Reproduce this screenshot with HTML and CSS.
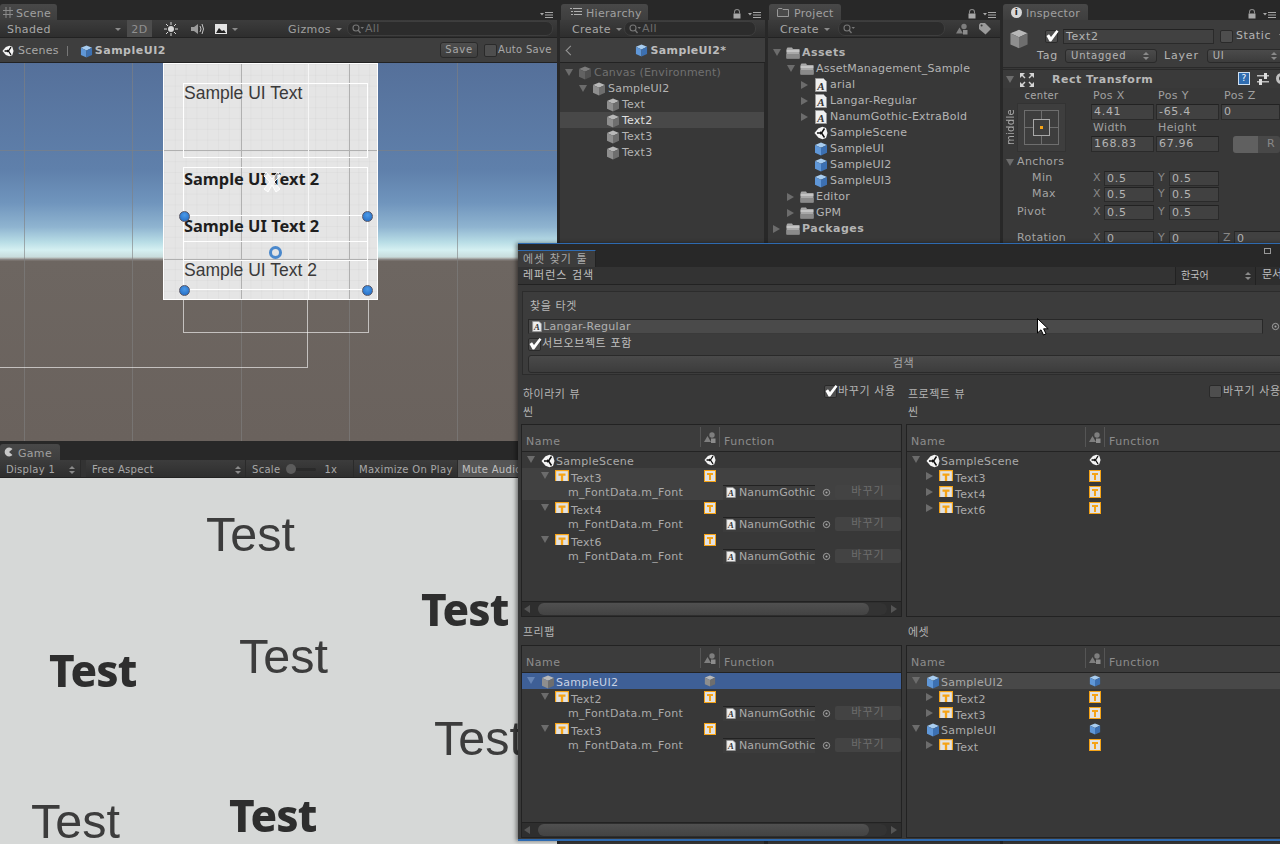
FILE: index.html
```html
<!DOCTYPE html>
<html lang="ko">
<head>
    <meta charset="UTF-8">
    <title>Unity Editor - Asset Finder</title>
    <link rel="stylesheet" href="styles.css">
</head>
<body>
    <!-- shared icons -->
    <svg class="defs" xmlns="http://www.w3.org/2000/svg">
        <symbol id="cube-blue" viewBox="0 0 14 14">
            <path d="M7 0.5 13 3 7 5.8 1 3z" fill="#a8cdf0"/>
            <path d="M1 3 7 5.8V13.5L1 10.8z" fill="#5f97d8"/>
            <path d="M13 3 7 5.8V13.5L13 10.8z" fill="#3c70b2"/>
        </symbol>
        <symbol id="cube-gray" viewBox="0 0 14 14">
            <path d="M7 0.5 13 3 7 5.8 1 3z" fill="#b8b8b8"/>
            <path d="M1 3 7 5.8V13.5L1 10.8z" fill="#8e8e8e"/>
            <path d="M13 3 7 5.8V13.5L13 10.8z" fill="#6e6e6e"/>
        </symbol>
        <symbol id="cube-dim" viewBox="0 0 14 14">
            <path d="M7 0.5 13 3 7 5.8 1 3z" fill="#7c7c7c"/>
            <path d="M1 3 7 5.8V13.5L1 10.8z" fill="#626262"/>
            <path d="M13 3 7 5.8V13.5L13 10.8z" fill="#505050"/>
        </symbol>
        <symbol id="unity" viewBox="0 0 14 14">
            <path d="M0.5 7 4.5 2.2 8.5 0.8 12 2 13.5 7 12 12 8.5 13.2 4.5 11.8z" fill="#f4f4f4"/>
            <path d="M3 7H7.5M7.5 7 10.5 2.5M7.5 7 10.5 11.5" stroke="#111" stroke-width="1.5" fill="none"/>
            <path d="M6 5.2 8.8 7 6 8.8z" fill="#111"/>
        </symbol>
        <symbol id="text-t" viewBox="0 0 12 12">
            <rect x="0.5" y="0.5" width="11" height="11" fill="#e2e2e2" stroke="#f5a316"/>
            <path d="M3 3H9V5H7V10H5V5H3z" fill="#f5a316"/>
        </symbol>
        <symbol id="folder" viewBox="0 0 14 12">
            <path d="M0.5 2 1.5 0.5H6L7 2H13.5V11.5H0.5z" fill="#a8a8a8"/>
            <path d="M0.5 3.5H13.5V4.5H0.5z" fill="#e0e0e0"/>
            <path d="M0.5 7H13.5V11.5H0.5z" fill="#8a8a8a"/>
        </symbol>
        <symbol id="font-a" viewBox="0 0 12 14">
            <path d="M0.5 0.5H8.5L11.5 3.5V13.5H0.5z" fill="#efefef" stroke="#999"/>
            <text x="6" y="12" font-family="Liberation Serif" font-size="11" font-weight="bold" font-style="italic" text-anchor="middle" fill="#333">A</text>
        </symbol>
        <symbol id="menu" viewBox="0 0 14 8">
            <path d="M0 2H4L2 4.5z" fill="#a8a8a8"/>
            <path d="M5 1H13V2H5zM5 3.5H13V4.5H5zM5 6H13V7H5z" fill="#a8a8a8"/>
        </symbol>
        <symbol id="lock" viewBox="0 0 8 10">
            <path d="M1 4.5V3A3 3 0 0 1 7 3V4.5H6V3A2 2 0 0 0 2 3V4.5z" fill="#8c8c8c"/>
            <rect x="0.5" y="4.5" width="7" height="5" fill="#a8a8a8"/>
        </symbol>
        <symbol id="target" viewBox="0 0 10 10">
            <circle cx="5" cy="5" r="3.5" fill="none" stroke="#aaa"/>
            <circle cx="5" cy="5" r="1.2" fill="#aaa"/>
        </symbol>
        <symbol id="shapes" viewBox="0 0 12 11">
            <circle cx="8" cy="3" r="2.7" fill="#7e7e7e"/>
            <path d="M0 10 3.5 4 7 10z" fill="#7e7e7e"/>
            <rect x="7" y="6.5" width="4.5" height="4.5" fill="#8c8c8c"/>
        </symbol>
        <symbol id="magnifier" viewBox="0 0 12 10">
            <circle cx="4" cy="4" r="3" fill="none" stroke="#777" stroke-width="1.1"/>
            <path d="M6 6 8.5 9" stroke="#777" stroke-width="1.3"/>
            <path d="M8.5 3H12L10.2 5z" fill="#777"/>
        </symbol>
        <symbol id="check" viewBox="0 0 14 14">
            <path d="M1.5 7 4 5.2 6 8 11.5 1 13.5 2.5 6.2 12.5H4.6z" fill="#fff"/>
        </symbol>
    </svg>

    <div class="editor">
        <!-- scene + game -->
        <div class="col-left">
            <section class="pane scene-pane">
                <div class="tabs">
                    <div class="tab tab-scene">
                        <svg class="hash" viewBox="0 0 10 11" width="10" height="11"><path d="M3 0V11M7 0V11M0 3.5H10M0 7.5H10" stroke="#8a8a8a"/></svg>Scene
                    </div>
                    <svg class="tab-menu"><use href="#menu"/></svg>
                </div>
                <div class="toolbar">
                    <span class="tb-shaded">Shaded<i class="mini-arrow"></i></span>
                    <span class="tb-2d">2D</span>
                    <svg class="tb-icon" viewBox="0 0 14 14" width="14" height="14">
                        <circle cx="7" cy="7" r="3" fill="#d8d8d8"/>
                        <path d="M7 0V3M7 11V14M0 7H3M11 7H14M2 2 4 4M10 10 12 12M12 2 10 4M4 10 2 12" stroke="#d8d8d8"/>
                    </svg>
                    <svg class="tb-icon" viewBox="0 0 14 14" width="14" height="14">
                        <path d="M0 5H3L7 2V12L3 9H0z" fill="#9c9c9c"/>
                        <path d="M9 4Q11 7 9 10M11 2Q14 7 11 12" fill="none" stroke="#c4c4c4"/>
                    </svg>
                    <svg class="tb-icon tb-img" viewBox="0 0 12 10" width="12" height="10">
                        <rect width="12" height="10" fill="#e4e4e4"/>
                        <path d="M1 9 4 4 7 7 9 6 11 9z" fill="#222"/>
                    </svg>
                    <i class="mini-arrow arrow-img"></i>
                    <span class="tb-gizmos">Gizmos<i class="mini-arrow"></i></span>
                    <div class="search scene-search"><svg class="mag"><use href="#magnifier"/></svg>All</div>
                </div>
                <div class="crumbs">
                    <svg class="ic12"><use href="#unity"/></svg>
                    <span class="crumb-scenes">Scenes</span>
                    <span class="crumb-bar"></span>
                    <svg class="ic13"><use href="#cube-blue"/></svg>
                    <b class="crumb-name">SampleUI2</b>
                    <span class="save-btn">Save</span>
                    <span class="checkbox"></span>
                    <span class="auto-save">Auto Save</span>
                </div>
                <div class="scene-view">
                    <span class="grid-v gv1"></span><span class="grid-v gv2"></span><span class="grid-v gv3"></span><span class="grid-v gv4"></span><span class="grid-v gv5"></span>
                    <span class="grid-h gh1"></span><span class="grid-h gh2"></span>
                    <div class="rect-below rb1"></div>
                    <div class="rect-below rb2"></div>
                    <div class="ui-canvas">
                        <span class="cv-line cv-v1"></span><span class="cv-line cv-v2"></span><span class="cv-line cv-h1"></span><span class="cv-line cv-h2"></span>
                        <span class="cv-white cw-v"></span>
                        <div class="ui-rect ur1"></div>
                        <div class="ui-rect ur2"></div>
                        <div class="ui-rect ur3"></div>
                        <div class="ui-text ut1">Sample UI Text</div>
                        <div class="ui-text ui-bold ut2">Sample UI Text 2</div>
                        <div class="ui-text ui-bold ut3">Sample UI Text 2</div>
                        <div class="ui-text ut4">Sample UI Text 2</div>
                        <svg class="move-tool" viewBox="0 0 24 24" width="24" height="24">
                            <path d="M6 2 12 9 18 2 20 6 14 12 20 19 16 22 12 15 8 22 4 19 10 12 4 6z" fill="#fff" fill-opacity="0.55" stroke="#fff"/>
                        </svg>
                        <span class="handle h1"></span><span class="handle h2"></span><span class="handle h3"></span><span class="handle h4"></span>
                        <span class="pivot"></span>
                    </div>
                </div>
            </section>

            <section class="pane game-pane">
                <div class="tabs">
                    <div class="tab tab-game"><svg class="pac" viewBox="0 0 10 10" width="10" height="10"><path d="M8.5 2A4.5 4.5 0 1 0 8.5 8L5 5z" fill="#c8c8c8"/></svg>Game</div>
                </div>
                <div class="toolbar game-bar">
                    <span class="gb-display">Display 1<i class="updown"></i></span>
                    <span class="gb-aspect">Free Aspect<i class="updown"></i></span>
                    <span class="gb-scale">Scale<i class="slider"><i class="thumb"></i></i><em>1x</em></span>
                    <span class="gb-max">Maximize On Play</span>
                    <span class="gb-mute">Mute Audio</span>
                </div>
                <div class="game-view">
                    <span class="test test-1">Test</span>
                    <span class="test test-bold test-2">Test</span>
                    <span class="test test-3">Test</span>
                    <span class="test test-bold test-4">Test</span>
                    <span class="test test-5">Test</span>
                    <span class="test test-6">Test</span>
                    <span class="test test-bold test-7">Test</span>
                </div>
            </section>
        </div>

        <!-- hierarchy -->
        <section class="pane">
            <div class="tabs">
                <div class="tab tab-hier"><svg class="list-ic" viewBox="0 0 12 8" width="12" height="8"><path d="M0 0H2V1H0zM3 0H12V1H3zM1 3H3V4H1zM4 3H12V4H4zM1 6H3V7H1zM4 6H12V7H4z" fill="#b0b0b0"/></svg>Hierarchy</div>
                <svg class="tab-lock"><use href="#lock"/></svg>
                <svg class="tab-menu"><use href="#menu"/></svg>
            </div>
            <div class="toolbar">
                <span class="create">Create<i class="mini-arrow"></i></span>
                <div class="search hier-search"><svg class="mag"><use href="#magnifier"/></svg>All</div>
            </div>
            <div class="prefab-head">
                <span class="back"></span>
                <svg class="ic13"><use href="#cube-blue"/></svg>
                <b>SampleUI2*</b>
            </div>
            <div class="tree hier-tree">
                <div class="row lv0 dim"><i class="tri-d"></i><svg class="ic"><use href="#cube-dim"/></svg>Canvas (Environment)</div>
                <div class="row lv1"><i class="tri-d"></i><svg class="ic"><use href="#cube-gray"/></svg>SampleUI2</div>
                <div class="row lv2"><i class="no-tri"></i><svg class="ic"><use href="#cube-gray"/></svg>Text</div>
                <div class="row lv2 picked"><i class="no-tri"></i><svg class="ic"><use href="#cube-gray"/></svg>Text2</div>
                <div class="row lv2"><i class="no-tri"></i><svg class="ic"><use href="#cube-gray"/></svg>Text3</div>
                <div class="row lv2"><i class="no-tri"></i><svg class="ic"><use href="#cube-gray"/></svg>Text3</div>
            </div>
        </section>

        <!-- project -->
        <section class="pane">
            <div class="tabs">
                <div class="tab tab-proj"><svg class="folder-tab" viewBox="0 0 12 9" width="12" height="9"><path d="M0.5 1.5 1.5 0.5H5L6 1.5H11.5V8.5H0.5z" fill="#4a4a4a" stroke="#999"/></svg>Project</div>
                <svg class="tab-lock"><use href="#lock"/></svg>
                <svg class="tab-menu"><use href="#menu"/></svg>
            </div>
            <div class="toolbar">
                <span class="create">Create<i class="mini-arrow"></i></span>
                <div class="search proj-search"><svg class="mag"><use href="#magnifier"/></svg></div>
                <svg class="proj-tool"><use href="#shapes"/></svg>
                <svg class="proj-tool" viewBox="0 0 12 12" width="12" height="12"><path d="M0 1.5 1.5 0H6L12 6 6.5 11.5 0 6z" fill="#9a9a9a"/><circle cx="2.6" cy="2.6" r="1" fill="#383838"/></svg>
            </div>
            <div class="tree proj-tree">
                <div class="row lv0 strong"><i class="tri-d"></i><svg class="ic"><use href="#folder"/></svg>Assets</div>
                <div class="row lv1"><i class="tri-d"></i><svg class="ic"><use href="#folder"/></svg>AssetManagement_Sample</div>
                <div class="row lv2"><i class="tri-r"></i><svg class="ic"><use href="#font-a"/></svg>arial</div>
                <div class="row lv2"><i class="tri-r"></i><svg class="ic"><use href="#font-a"/></svg>Langar-Regular</div>
                <div class="row lv2"><i class="tri-r"></i><svg class="ic"><use href="#font-a"/></svg>NanumGothic-ExtraBold</div>
                <div class="row lv2"><i class="no-tri"></i><svg class="ic"><use href="#unity"/></svg>SampleScene</div>
                <div class="row lv2"><i class="no-tri"></i><svg class="ic"><use href="#cube-blue"/></svg>SampleUI</div>
                <div class="row lv2"><i class="no-tri"></i><svg class="ic"><use href="#cube-blue"/></svg>SampleUI2</div>
                <div class="row lv2"><i class="no-tri"></i><svg class="ic"><use href="#cube-blue"/></svg>SampleUI3</div>
                <div class="row lv1"><i class="tri-r"></i><svg class="ic"><use href="#folder"/></svg>Editor</div>
                <div class="row lv1"><i class="tri-r"></i><svg class="ic"><use href="#folder"/></svg>GPM</div>
                <div class="row lv0 strong"><i class="tri-r"></i><svg class="ic"><use href="#folder"/></svg>Packages</div>
            </div>
        </section>

        <!-- inspector -->
        <section class="pane">
            <div class="tabs">
                <div class="tab tab-insp"><span class="info-ic">i</span>Inspector</div>
                <svg class="tab-lock"><use href="#lock"/></svg>
                <svg class="tab-menu"><use href="#menu"/></svg>
            </div>
            <div class="insp-head">
                <svg class="insp-cube"><use href="#cube-gray"/></svg>
                <div class="insp-lines">
                    <div class="insp-line">
                        <span class="checkbox on"><svg><use href="#check"/></svg></span>
                        <span class="field name-field">Text2</span>
                        <span class="checkbox"></span>
                        <span class="static">Static</span>
                        <i class="big-arrow"></i>
                    </div>
                    <div class="insp-line tag-line">
                        <span>Tag</span>
                        <span class="popup tag-pop">Untagged<i class="updown"></i></span>
                        <span class="layer-label">Layer</span>
                        <span class="popup layer-pop">UI<i class="updown"></i></span>
                    </div>
                </div>
            </div>
            <div class="comp-head">
                <i class="tri-d"></i>
                <svg class="rt-ic" viewBox="0 0 16 16" width="16" height="16"><path d="M1 1H6L4 3 6.5 5.5 5.5 6.5 3 4 1 6zM15 1V6L13 4 10.5 6.5 9.5 5.5 12 3 10 1zM1 15V10L3 12 5.5 9.5 6.5 10.5 4 13 6 15zM15 15H10L12 13 9.5 10.5 10.5 9.5 13 12 15 10z" fill="#d4d4d4"/></svg>
                <b>Rect Transform</b>
                <span class="help-ic">?</span>
                <svg class="sliders-ic" viewBox="0 0 12 12" width="12" height="12"><path d="M0 2H12V3.5H0zM0 8H12V9.5H0z" fill="#bbb"/><rect x="7" y="0" width="3" height="6" fill="#ddd"/><rect x="2" y="6" width="3" height="6" fill="#ddd"/></svg>
                <span class="gear-ic"></span>
            </div>
            <div class="rect-grid">
                <div class="anchor-col">
                    <span class="anchor-top">center</span>
                    <div class="anchor-wrap">
                        <span class="anchor-side">middle</span>
                        <div class="anchor-box"><div class="anchor-outer"><div class="anchor-inner"><i></i></div></div></div>
                    </div>
                </div>
                <div class="pos-col">
                    <div class="lab3"><span>Pos X</span><span>Pos Y</span><span>Pos Z</span></div>
                    <div class="val3"><span class="field">4.41</span><span class="field">-65.4</span><span class="field">0</span></div>
                    <div class="lab3"><span>Width</span><span>Height</span></div>
                    <div class="val3"><span class="field">168.83</span><span class="field">67.96</span><span class="blueprint"><i></i><em>R</em></span></div>
                </div>
            </div>
            <div class="prop anchors-h"><i class="tri-d"></i>Anchors</div>
            <div class="prop xy sub"><span class="prop-name">Min</span><span class="ax">X</span><span class="field">0.5</span><span class="ax">Y</span><span class="field">0.5</span></div>
            <div class="prop xy sub"><span class="prop-name">Max</span><span class="ax">X</span><span class="field">0.5</span><span class="ax">Y</span><span class="field">0.5</span></div>
            <div class="prop xy pivot-row"><span class="prop-name">Pivot</span><span class="ax">X</span><span class="field">0.5</span><span class="ax">Y</span><span class="field">0.5</span></div>
            <div class="prop xy rot-row"><span class="prop-name">Rotation</span><span class="ax">X</span><span class="field">0</span><span class="ax">Y</span><span class="field">0</span><span class="ax ax-z">Z</span><span class="field">0</span></div>
        </section>
    </div>

    <!-- floating window -->
    <div class="win">
        <div class="win-top">
            <div class="win-tab">에셋 찾기 툴</div>
            <span class="win-ctl"></span>
        </div>
        <div class="win-bar">
            <span class="win-title">레퍼런스 검색</span>
            <span class="lang-pop">한국어<i class="updown"></i></span>
            <span class="doc-btn">문서</span>
        </div>
        <div class="target-box">
            <div class="target-label">찾을 타겟</div>
            <div class="target-field-row">
                <div class="target-field"><svg class="ic-font"><use href="#font-a"/></svg>Langar-Regular</div>
                <svg class="ic-target"><use href="#target"/></svg>
            </div>
            <label class="check-row"><span class="checkbox on"><svg><use href="#check"/></svg></span>서브오브젝트 포함</label>
            <div class="search-btn">검색</div>
        </div>

        <div class="win-cols">
            <div class="col">
                <div class="col-head"><span>하이라키 뷰</span><label class="use-check"><span class="checkbox on"><svg><use href="#check"/></svg></span>바꾸기 사용</label></div>
                <div class="col-sub">씬</div>
                <div class="table">
                    <div class="t-head"><span>Name</span><span class="t-ic"><svg><use href="#shapes"/></svg></span><span>Function</span></div>
                    <div class="t-body">
                        <div class="t-row"><div class="t-name wl0"><i class="tri-d"></i><svg class="ic"><use href="#unity"/></svg>SampleScene</div><svg class="ic2"><use href="#unity"/></svg></div>
                        <div class="t-hilite">
                            <div class="t-row"><div class="t-name wl1"><i class="tri-d"></i><svg class="ic-t"><use href="#text-t"/></svg>Text3</div><svg class="ic2"><use href="#text-t"/></svg></div>
                            <div class="t-row"><div class="t-name wl2">m_FontData.m_Font</div><div class="fn-cell"><div class="fn-field"><svg class="ic-font"><use href="#font-a"/></svg>NanumGothic</div><svg class="ic-target"><use href="#target"/></svg><span class="swap-btn">바꾸기</span></div></div>
                        </div>
                        <div class="t-row"><div class="t-name wl1"><i class="tri-d"></i><svg class="ic-t"><use href="#text-t"/></svg>Text4</div><svg class="ic2"><use href="#text-t"/></svg></div>
                        <div class="t-row"><div class="t-name wl2">m_FontData.m_Font</div><div class="fn-cell"><div class="fn-field"><svg class="ic-font"><use href="#font-a"/></svg>NanumGothic</div><svg class="ic-target"><use href="#target"/></svg><span class="swap-btn">바꾸기</span></div></div>
                        <div class="t-row"><div class="t-name wl1"><i class="tri-d"></i><svg class="ic-t"><use href="#text-t"/></svg>Text6</div><svg class="ic2"><use href="#text-t"/></svg></div>
                        <div class="t-row"><div class="t-name wl2">m_FontData.m_Font</div><div class="fn-cell"><div class="fn-field"><svg class="ic-font"><use href="#font-a"/></svg>NanumGothic</div><svg class="ic-target"><use href="#target"/></svg><span class="swap-btn">바꾸기</span></div></div>
                    </div>
                    <div class="t-scroll"><i class="arr-l"></i><div class="s-track"><div class="s-thumb"></div></div><i class="arr-r"></i></div>
                </div>
            </div>

            <div class="col">
                <div class="col-head"><span>프로젝트 뷰</span><label class="use-check"><span class="checkbox"></span>바꾸기 사용</label></div>
                <div class="col-sub">씬</div>
                <div class="table">
                    <div class="t-head"><span>Name</span><span class="t-ic"><svg><use href="#shapes"/></svg></span><span>Function</span></div>
                    <div class="t-body">
                        <div class="t-row"><div class="t-name wl0"><i class="tri-d"></i><svg class="ic"><use href="#unity"/></svg>SampleScene</div><svg class="ic2"><use href="#unity"/></svg></div>
                        <div class="t-row"><div class="t-name wl1"><i class="tri-r"></i><svg class="ic-t"><use href="#text-t"/></svg>Text3</div><svg class="ic2"><use href="#text-t"/></svg></div>
                        <div class="t-row"><div class="t-name wl1"><i class="tri-r"></i><svg class="ic-t"><use href="#text-t"/></svg>Text4</div><svg class="ic2"><use href="#text-t"/></svg></div>
                        <div class="t-row"><div class="t-name wl1"><i class="tri-r"></i><svg class="ic-t"><use href="#text-t"/></svg>Text6</div><svg class="ic2"><use href="#text-t"/></svg></div>
                    </div>
                </div>
            </div>

            <div class="col">
                <div class="col-head col-head-low"><span>프리팹</span></div>
                <div class="table">
                    <div class="t-head"><span>Name</span><span class="t-ic"><svg><use href="#shapes"/></svg></span><span>Function</span></div>
                    <div class="t-body">
                        <div class="t-row selected"><div class="t-name wl0"><i class="tri-d"></i><svg class="ic"><use href="#cube-gray"/></svg>SampleUI2</div><svg class="ic2"><use href="#cube-gray"/></svg></div>
                        <div class="t-row"><div class="t-name wl1"><i class="tri-d"></i><svg class="ic-t"><use href="#text-t"/></svg>Text2</div><svg class="ic2"><use href="#text-t"/></svg></div>
                        <div class="t-row"><div class="t-name wl2">m_FontData.m_Font</div><div class="fn-cell"><div class="fn-field"><svg class="ic-font"><use href="#font-a"/></svg>NanumGothic</div><svg class="ic-target"><use href="#target"/></svg><span class="swap-btn">바꾸기</span></div></div>
                        <div class="t-row"><div class="t-name wl1"><i class="tri-d"></i><svg class="ic-t"><use href="#text-t"/></svg>Text3</div><svg class="ic2"><use href="#text-t"/></svg></div>
                        <div class="t-row"><div class="t-name wl2">m_FontData.m_Font</div><div class="fn-cell"><div class="fn-field"><svg class="ic-font"><use href="#font-a"/></svg>NanumGothic</div><svg class="ic-target"><use href="#target"/></svg><span class="swap-btn">바꾸기</span></div></div>
                    </div>
                    <div class="t-scroll"><i class="arr-l"></i><div class="s-track"><div class="s-thumb"></div></div><i class="arr-r"></i></div>
                </div>
            </div>

            <div class="col">
                <div class="col-head col-head-low"><span>에셋</span></div>
                <div class="table">
                    <div class="t-head"><span>Name</span><span class="t-ic"><svg><use href="#shapes"/></svg></span><span>Function</span></div>
                    <div class="t-body">
                        <div class="t-row soft"><div class="t-name wl0"><i class="tri-d"></i><svg class="ic"><use href="#cube-blue"/></svg>SampleUI2</div><svg class="ic2"><use href="#cube-blue"/></svg></div>
                        <div class="t-row"><div class="t-name wl1"><i class="tri-r"></i><svg class="ic-t"><use href="#text-t"/></svg>Text2</div><svg class="ic2"><use href="#text-t"/></svg></div>
                        <div class="t-row"><div class="t-name wl1"><i class="tri-r"></i><svg class="ic-t"><use href="#text-t"/></svg>Text3</div><svg class="ic2"><use href="#text-t"/></svg></div>
                        <div class="t-row"><div class="t-name wl0"><i class="tri-d"></i><svg class="ic"><use href="#cube-blue"/></svg>SampleUI</div><svg class="ic2"><use href="#cube-blue"/></svg></div>
                        <div class="t-row"><div class="t-name wl1"><i class="tri-r"></i><svg class="ic-t"><use href="#text-t"/></svg>Text</div><svg class="ic2"><use href="#text-t"/></svg></div>
                    </div>
                </div>
            </div>
        </div>
    </div>

    <svg class="cursor" viewBox="0 0 12 18" width="12" height="18">
        <path d="M0.5 0.5V15L4 11.8 6.5 17 9 15.8 6.6 10.8H11.2z" fill="#fff" stroke="#000"/>
    </svg>
</body>
</html>
```
FILE: styles.css
```css
/* Global Styles */
html, body {
    margin: 0;
    padding: 0;
    width: 1280px;
    height: 844px;
    overflow: hidden;
}

body {
    position: relative;
    background: #282828;
    color: #b4b4b4;
    font-family: "DejaVu Sans", "Noto Sans CJK KR", sans-serif;
    font-size: 11px;
    line-height: 16px;
}

i, em {
    font-style: normal;
}

.defs {
    display: none;
}

.editor {
    display: grid;
    grid-template-columns: 557px 205px 232px 277px;
    column-gap: 3px;
    height: 844px;
}

.col-left {
    display: flex;
    flex-direction: column;
    overflow: hidden;
}

.pane {
    display: flex;
    flex-direction: column;
    background: #383838;
    overflow: hidden;
    min-width: 0;
}

.scene-pane {
    height: 441px;
    flex: none;
}

.game-pane {
    flex: 1;
    background: #282828;
}

/* Tabs */
.tabs {
    display: flex;
    align-items: flex-end;
    height: 20px;
    background: #282828;
    flex: none;
    position: relative;
}

.tab {
    display: flex;
    align-items: center;
    height: 16px;
    padding-top: 3px;
    box-sizing: border-box;
    background: linear-gradient(#484848, #3e3e3e);
    border-radius: 3px 3px 0 0;
    color: #a0a0a0;
    letter-spacing: 0.3px;
}

.tab-scene {
    width: 57px;
    padding-left: 3px;
}

.hash {
    margin: -3px 3px 0 0;
    flex: none;
}

.tab-game {
    width: 60px;
    padding-left: 4px;
}

.pac {
    margin: -3px 4px 0 0;
    flex: none;
}

.tab-hier {
    width: 87px;
    padding-left: 9px;
    margin-left: 1px;
}

.list-ic {
    margin: -3px 4px 0 0;
    flex: none;
}

.tab-proj {
    width: 72px;
    padding-left: 8px;
    margin-left: 1px;
}

.folder-tab {
    margin: -3px 5px 0 0;
    flex: none;
}

.tab-insp {
    width: 85px;
    padding-left: 8px;
}

.info-ic {
    flex: none;
    width: 11px;
    height: 11px;
    margin: -3px 4px 0 0;
    border-radius: 50%;
    background: #d8d8d8;
    color: #282828;
    font-size: 9px;
    line-height: 11px;
    font-weight: bold;
    text-align: center;
}

.tab-menu {
    position: absolute;
    right: 3px;
    top: 11px;
    width: 14px;
    height: 8px;
}

.tab-lock {
    position: absolute;
    right: 24px;
    top: 9px;
    width: 8px;
    height: 10px;
}

/* Toolbars */
.toolbar {
    display: flex;
    align-items: center;
    height: 18px;
    padding-top: 2px;
    box-sizing: border-box;
    flex: none;
    background: linear-gradient(#3c3c3c, #2e2e2e);
    border-bottom: 1px solid #222;
    color: #a8a8a8;
    letter-spacing: 0.4px;
    white-space: nowrap;
}

.mini-arrow {
    display: inline-block;
    width: 0;
    height: 0;
    margin-left: 8px;
    vertical-align: 2px;
    border: 3px solid transparent;
    border-top: 3px solid #8a8a8a;
    border-bottom: 0;
}

.tb-shaded {
    width: 120px;
    padding-left: 7px;
    box-sizing: border-box;
}

.tb-shaded .mini-arrow {
    margin-left: 64px;
}

.tb-2d {
    width: 25px;
    height: 17px;
    margin: -2px 0 0 7px;
    padding-top: 2px;
    box-sizing: border-box;
    background: #4c4c4c;
    text-align: center;
    color: #909090;
}

.tb-icon {
    margin: -2px 0 0 12px;
    flex: none;
}

.tb-icon + .tb-icon {
    margin-left: 13px;
}

.tb-icon.tb-img {
    margin-left: 10px;
}

.arrow-img {
    margin-left: 5px;
}

.tb-gizmos {
    margin-left: 50px;
    color: #a0a0a0;
}

.tb-gizmos .mini-arrow {
    margin-left: 5px;
}

.search {
    display: flex;
    align-items: center;
    height: 13px;
    margin-top: -2px;
    background: #2c2c2c;
    border: 1px solid #3e3e3e;
    border-radius: 7px;
    color: #6e6e6e;
}

.mag {
    width: 12px;
    height: 10px;
    margin: 0 1px 0 4px;
    flex: none;
}

.scene-search {
    width: 204px;
    margin-left: 5px;
}

.hier-search {
    width: 130px;
    margin-left: 8px;
}

.proj-search {
    width: 105px;
    margin-left: 14px;
}

.create {
    width: 50px;
    margin-left: 6px;
    padding-left: 6px;
    box-sizing: border-box;
}

.create .mini-arrow {
    margin-left: 5px;
}

.proj-tool {
    width: 12px;
    height: 12px;
    margin: -2px 0 0 11px;
    flex: none;
}

.crumbs {
    display: flex;
    align-items: center;
    height: 25px;
    padding: 2px 0 0 2px;
    box-sizing: border-box;
    background: #3e3e3e;
    border-bottom: 1px solid #222;
    flex: none;
    color: #a8a8a8;
    letter-spacing: 0.25px;
}

.ic12 {
    width: 12px;
    height: 12px;
    flex: none;
}

.ic13 {
    width: 13px;
    height: 13px;
    flex: none;
}

.crumb-scenes {
    margin-left: 4px;
}

.crumb-bar {
    width: 1px;
    height: 10px;
    margin: 0 12px 0 8px;
    background: #777;
}

.crumb-name {
    margin-left: 2px;
    color: #bcbcbc;
    letter-spacing: 0.5px;
}

.save-btn {
    height: 14px;
    margin: -2px 0 0 auto;
    padding: 0 4px;
    line-height: 14px;
    background: linear-gradient(#4e4e4e, #3e3e3e);
    border: 1px solid #2a2a2a;
    border-radius: 3px;
    font-size: 10px;
    letter-spacing: 0.8px;
}

.checkbox {
    display: inline-flex;
    width: 13px;
    height: 13px;
    flex: none;
    background: #4e4e4e;
    border: 1px solid #2a2a2a;
    border-radius: 2px;
    box-sizing: border-box;
}

.checkbox svg {
    width: 14px;
    height: 14px;
    margin: -2px 0 0 -1px;
    flex: none;
}

.crumbs .checkbox {
    margin: -2px 0 0 6px;
}

.auto-save {
    width: 59px;
    margin: -2px 0 0 1px;
    font-size: 10px;
    letter-spacing: 0.3px;
    white-space: nowrap;
}

/* Scene view: a free canvas of world-space lines and gizmos */
.scene-view {
    position: relative;
    flex: 1;
    overflow: hidden;
    background: linear-gradient(#55709a 0, #5f80ab 107px, #7095bd 140px, #8fb4d0 164px, #b8dde6 179px, #d5f0f2 187px, #c8dcdc 194px, #9e9a96 196px, #6d6661 198px, #6a625d 377px);
}

.grid-v {
    position: absolute;
    top: 0;
    bottom: 0;
    width: 1px;
    background: rgba(128, 128, 128, 0.6);
}

.gv1 { left: 24px; }
.gv2 { left: 132px; }
.gv3 { left: 241px; }
.gv4 { left: 349px; }
.gv5 { left: 457px; }

.grid-h {
    position: absolute;
    left: 0;
    right: 0;
    height: 1px;
    background: rgba(128, 128, 128, 0.6);
}

.gh1 { top: 87px; }
.gh2 { top: 196px; }

.rect-below {
    position: absolute;
    border-right: 1px solid rgba(255, 255, 255, 0.6);
    border-bottom: 1px solid rgba(255, 255, 255, 0.6);
}

.rb1 {
    left: 0;
    top: 100px;
    width: 307px;
    height: 204px;
}

.rb2 {
    left: 183px;
    top: 200px;
    width: 184px;
    height: 69px;
    border-left: 1px solid rgba(255, 255, 255, 0.6);
}

.ui-canvas {
    position: absolute;
    left: 163px;
    top: 0;
    width: 213px;
    height: 235px;
    background-color: #e5e5e5;
    background-image: linear-gradient(rgba(0, 0, 0, 0.025) 1px, transparent 1px), linear-gradient(90deg, rgba(0, 0, 0, 0.025) 1px, transparent 1px);
    background-size: 10.8px 10.8px;
    border: 1px solid #fff;
}

.cv-line {
    position: absolute;
    background: #b0b0b0;
}

.cv-v1, .cv-v2 {
    top: 0;
    bottom: 0;
    width: 1px;
}

.cv-v1 { left: 77px; }
.cv-v2 { left: 185px; }

.cv-h1, .cv-h2 {
    left: 0;
    right: 0;
    height: 1px;
}

.cv-h1 { top: 86px; }
.cv-h2 { top: 195px; }

.cv-white {
    position: absolute;
    left: 144px;
    top: 0;
    bottom: 0;
    width: 1px;
    background: #f6f6f6;
}

.ui-rect {
    position: absolute;
    left: 19px;
    width: 183px;
    border: 1px solid #fff;
}

.ur1 { top: 19px; height: 73px; }
.ur2 { top: 103px; height: 74px; border-bottom: 0; }
.ur3 { top: 151px; height: 73px; }

.ui-rect.ur3::before,
.ui-rect.ur3::after {
    content: "";
    position: absolute;
    left: 0;
    right: 0;
    height: 1px;
    background: #fff;
}

.ui-rect.ur3::before { top: 25px; }
.ui-rect.ur3::after { top: 44px; }

.ui-text {
    position: absolute;
    left: 20px;
    font-family: "Liberation Sans", sans-serif;
    font-size: 17.5px;
    line-height: 20px;
    color: #3a3a3a;
    white-space: nowrap;
}

.ui-bold {
    font-family: "Noto Sans", sans-serif;
    font-weight: 700;
    font-size: 16.4px;
    color: #1e1e1e;
}

.ut1 { top: 19px; }
.ut2 { top: 105px; }
.ut3 { top: 152px; }
.ut4 { top: 196px; }

.move-tool {
    position: absolute;
    left: 96px;
    top: 106px;
}

.handle {
    position: absolute;
    width: 9px;
    height: 9px;
    border-radius: 50%;
    background: radial-gradient(circle at 50% 35%, #4c9ae8, #1d66c0);
    border: 1px solid #556;
}

.h1 { left: 15px; top: 147px; }
.h2 { left: 198px; top: 147px; }
.h3 { left: 15px; top: 221px; }
.h4 { left: 198px; top: 221px; }

.pivot {
    position: absolute;
    left: 105px;
    top: 182px;
    width: 7px;
    height: 7px;
    border-radius: 50%;
    background: #e4e4e4;
    border: 3px solid #4a88cc;
}

/* Game */
.game-pane .tabs {
    height: 19px;
}

.game-bar {
    height: 18px;
    padding-top: 0;
    font-size: 10px;
    letter-spacing: 0.3px;
}

.game-bar > span {
    display: flex;
    align-items: center;
    height: 17px;
    box-sizing: border-box;
    padding-top: 2px;
    white-space: nowrap;
    border-right: 1px solid #2a2a2a;
}

.updown {
    position: relative;
    display: inline-block;
    flex: none;
    width: 7px;
    height: 8px;
    margin-left: auto;
}

.updown::before,
.updown::after {
    content: "";
    position: absolute;
    left: 0;
    border: 3px solid transparent;
}

.updown::before {
    top: -3px;
    border-bottom-color: #8a8a8a;
}

.updown::after {
    bottom: -3px;
    border-top-color: #8a8a8a;
}

.gb-display {
    width: 81px;
    padding: 2px 4px 0 6px;
}

.gb-aspect {
    width: 165px;
    padding: 2px 3px 0 6px;
    border-left: 5px solid #333;
}

.gb-scale {
    width: 108px;
    padding-left: 6px;
}

.slider {
    position: relative;
    width: 30px;
    height: 3px;
    margin-left: 6px;
    background: #2a2a2a;
    border-radius: 2px;
}

.thumb {
    position: absolute;
    left: 0;
    top: -4px;
    width: 10px;
    height: 10px;
    border-radius: 50%;
    background: #5c5c5c;
}

.gb-scale em {
    margin-left: 8px;
}

.gb-max {
    width: 104px;
    padding-left: 5px;
}

.gb-mute {
    flex: 1;
    padding-left: 4px;
    background: #555;
    color: #c0c0c0;
}

.game-view {
    position: relative;
    flex: 1;
    background: #d6d8d7;
    overflow: hidden;
}

.test {
    position: absolute;
    font-family: "Liberation Sans", sans-serif;
    font-size: 48.5px;
    line-height: 46px;
    color: #3c3c3c;
    filter: blur(0.6px);
}

.test-bold {
    font-family: "Noto Sans", sans-serif;
    font-weight: 800;
    font-size: 44px;
    color: #2e2e2e;
    letter-spacing: -1px;
}

.test-1 { left: 206px; top: 33px; }
.test-2 { left: 421px; top: 108px; }
.test-3 { left: 239px; top: 155px; }
.test-4 { left: 49px; top: 169px; }
.test-5 { left: 434px; top: 237px; }
.test-6 { left: 31px; top: 320px; }
.test-7 { left: 229px; top: 314px; }

/* Trees */
.prefab-head {
    display: flex;
    align-items: center;
    justify-content: center;
    height: 25px;
    padding: 1px 0 0 36px;
    box-sizing: border-box;
    position: relative;
    background: #3e3e3e;
    border-bottom: 1px solid #222;
    flex: none;
    letter-spacing: 0.35px;
    color: #bcbcbc;
}

.prefab-head b {
    margin-left: 3px;
}

.back {
    position: absolute;
    left: 7px;
    top: 9px;
    width: 6px;
    height: 6px;
    border-left: 1px solid #999;
    border-bottom: 1px solid #999;
    transform: rotate(45deg);
}

.tree {
    flex: 1;
    letter-spacing: 0.22px;
}

.hier-tree {
    padding-top: 1px;
    border-right: 1px solid #282828;
}

.proj-tree {
    padding-top: 6px;
}

.row {
    display: flex;
    align-items: center;
    height: 16px;
    padding-top: 1px;
    box-sizing: border-box;
    white-space: nowrap;
}

.lv0 { padding-left: 5px; }
.lv1 { padding-left: 19px; }
.lv2 { padding-left: 33px; }

.dim { color: #707070; }
.strong { font-weight: bold; letter-spacing: 0.5px; }

.picked {
    background: #484848;
    color: #e0e0e0;
}

.tri-d, .tri-r, .no-tri {
    display: inline-block;
    flex: none;
    box-sizing: border-box;
    width: 0;
    height: 0;
}

.tri-d {
    margin-right: 5px;
    border-left: 4px solid transparent;
    border-right: 4px solid transparent;
    border-top: 7px solid #6c6c6c;
}

.tri-r {
    margin-right: 6px;
    border-top: 4px solid transparent;
    border-bottom: 4px solid transparent;
    border-left: 7px solid #6c6c6c;
}

.no-tri {
    width: 13px;
}

.ic {
    width: 14px;
    height: 14px;
    margin-right: 2px;
    flex: none;
}

/* Inspector */
.insp-head {
    display: flex;
    height: 48px;
    flex: none;
    padding-left: 6px;
    background: #3c3c3c;
    border-bottom: 1px solid #2a2a2a;
    box-sizing: border-box;
}

.insp-cube {
    width: 20px;
    height: 22px;
    margin-top: 8px;
    flex: none;
}

.insp-lines {
    margin-left: 16px;
    flex: 1;
    min-width: 0;
}

.insp-line {
    display: flex;
    align-items: center;
    margin-top: 9px;
    height: 14px;
}

.field {
    display: block;
    height: 15px;
    padding-left: 2px;
    background: #414141;
    border: 1px solid #2a2a2a;
    border-top-color: #222;
    box-sizing: border-box;
    line-height: 14px;
    color: #b4b4b4;
    letter-spacing: 0.7px;
    overflow: hidden;
}

.name-field {
    width: 151px;
    flex: none;
    margin: 0 6px 0 5px;
}

.static {
    margin-left: 3px;
    letter-spacing: 0.6px;
}

.big-arrow {
    width: 0;
    height: 0;
    flex: none;
    margin-left: 8px;
    border: 4px solid transparent;
    border-top: 5px solid #aaa;
    border-bottom: 0;
}

.tag-line {
    margin-top: 6px;
    margin-left: -8px;
    letter-spacing: 0.8px;
}

.popup {
    display: flex;
    align-items: center;
    flex: none;
    height: 14px;
    padding: 0 6px 0 5px;
    box-sizing: border-box;
    background: linear-gradient(#4b4b4b, #3c3c3c);
    border: 1px solid #2a2a2a;
    border-radius: 3px;
    font-size: 10px;
    letter-spacing: 0.8px;
}

.tag-pop {
    width: 92px;
    margin-left: 7px;
}

.layer-label {
    margin-left: 7px;
}

.layer-pop {
    width: 78px;
    margin-left: 8px;
}

.comp-head {
    display: flex;
    align-items: center;
    height: 19px;
    flex: none;
    padding: 1px 0 0 3px;
    position: relative;
    background: #3a3a3a;
    border-top: 1px solid #2a2a2a;
    margin-top: 1px;
    box-sizing: border-box;
}

.comp-head b {
    margin-left: 17px;
    letter-spacing: 0.5px;
    color: #b8b8b8;
}

.help-ic {
    position: absolute;
    left: 235px;
    top: 2px;
    width: 12px;
    height: 13px;
    background: #2f6cb0;
    border: 1px solid #cfdff0;
    box-sizing: border-box;
    font-size: 9px;
    line-height: 11px;
    text-align: center;
    color: #fff;
}

.sliders-ic {
    position: absolute;
    left: 254px;
    top: 3px;
}

.gear-ic {
    position: absolute;
    left: 273px;
    top: 3px;
    width: 11px;
    height: 11px;
    border-radius: 50%;
    border: 3px solid #c0c0c0;
    box-sizing: border-box;
}

.rect-grid {
    display: flex;
    flex: none;
    height: 65px;
}

.anchor-col {
    width: 88px;
    flex: none;
    padding-left: 2px;
    box-sizing: border-box;
}

.anchor-top {
    display: block;
    width: 49px;
    margin-left: 12px;
    height: 15px;
    line-height: 16px;
    text-align: center;
    font-size: 10px;
    letter-spacing: 0.3px;
    color: #a8a8a8;
}

.anchor-wrap {
    display: flex;
}

.anchor-side {
    writing-mode: vertical-rl;
    transform: rotate(180deg);
    width: 11px;
    height: 49px;
    font-size: 10px;
    line-height: 11px;
    text-align: center;
    color: #a8a8a8;
    letter-spacing: 0.3px;
}

.anchor-box {
    display: flex;
    align-items: center;
    justify-content: center;
    width: 49px;
    height: 49px;
    margin-left: 1px;
    background: #3e3e3e;
    border: 1px solid #333;
    box-sizing: border-box;
    flex: none;
}

.anchor-outer {
    display: flex;
    align-items: center;
    justify-content: center;
    width: 35px;
    height: 35px;
    border: 1px solid #6e6e6e;
    box-sizing: border-box;
    background: linear-gradient(#6e6e6e, #6e6e6e) center / 100% 1px no-repeat, linear-gradient(#6e6e6e, #6e6e6e) center / 1px 100% no-repeat;
}

.anchor-inner {
    display: flex;
    align-items: center;
    justify-content: center;
    width: 17px;
    height: 17px;
    border: 1px solid #a8a8a8;
    box-sizing: border-box;
    background: #3e3e3e;
}

.anchor-inner i {
    width: 3px;
    height: 3px;
    background: #f5a316;
}

.pos-col {
    flex: 1;
    min-width: 0;
}

.lab3 {
    display: grid;
    grid-template-columns: 65px 66px 1fr;
    height: 16px;
    padding-left: 2px;
    letter-spacing: 0.4px;
    color: #a0a0a0;
}

.val3 {
    display: grid;
    grid-template-columns: 63px 63px 1fr;
    column-gap: 2px;
    height: 16px;
}

.val3 .field {
    height: 16px;
    line-height: 14px;
}

.blueprint {
    display: flex;
    height: 17px;
    margin-left: 12px;
    border-radius: 3px;
    overflow: hidden;
}

.blueprint i {
    width: 25px;
    background: #606060;
}

.blueprint em {
    flex: 1;
    padding-left: 9px;
    background: #484848;
    color: #888;
}

.prop {
    display: flex;
    align-items: center;
    height: 16px;
    flex: none;
    letter-spacing: 0.4px;
    color: #a4a4a4;
}

.anchors-h {
    padding-left: 3px;
    margin-top: 1px;
}

.anchors-h .tri-d {
    margin-right: 3px;
}

.xy .prop-name {
    width: 79px;
    padding-left: 14px;
    box-sizing: border-box;
    flex: none;
}

.xy.sub .prop-name {
    padding-left: 29px;
}

.ax {
    width: 11px;
    margin-left: 11px;
    flex: none;
    color: #888;
}

.xy .field {
    width: 50px;
    height: 15px;
    flex: none;
}

.xy .ax + .field + .ax {
    margin-left: 4px;
}

.xy .ax-z {
    margin-left: 5px;
}

.pivot-row {
    margin-top: 2px;
}

.rot-row {
    margin-top: 10px;
}

/* Floating window */
.win {
    position: absolute;
    left: 518px;
    top: 243px;
    width: 772px;
    height: 598px;
    box-sizing: border-box;
    background: #383838;
    border-top: 1px solid #2e6ab0;
    border-bottom: 2px solid #2e6ab0;
    box-shadow: -2px 0 4px rgba(0, 0, 0, 0.45);
}

.win-top {
    position: relative;
    display: flex;
    align-items: flex-end;
    height: 23px;
    background: #282828;
}

.win-tab {
    width: 78px;
    height: 17px;
    padding: 1px 0 0 5px;
    box-sizing: border-box;
    background: #3c3c3c;
    border-top: 1px solid #2e6ab0;
    border-right: 1px solid #222;
    line-height: 16px;
    color: #a8a8a8;
    letter-spacing: 1px;
    white-space: nowrap;
}

.win-ctl {
    position: absolute;
    right: 19px;
    top: 4px;
    width: 5px;
    height: 4px;
    border: 1px solid #999;
}

.win-bar {
    display: flex;
    align-items: center;
    height: 18px;
    padding: 1px 0 0 5px;
    background: #333;
    border-bottom: 1px solid #222;
    box-sizing: border-box;
    color: #c0c0c0;
    letter-spacing: 1px;
}

.lang-pop {
    display: flex;
    align-items: center;
    width: 80px;
    height: 18px;
    margin: -1px 0 0 auto;
    padding: 0 3px 0 5px;
    box-sizing: border-box;
    background: #2e2e2e;
    border-left: 1px solid #222;
    font-size: 10px;
    letter-spacing: 0;
}

.doc-btn {
    width: 35px;
    height: 18px;
    margin-top: -1px;
    padding-left: 6px;
    box-sizing: border-box;
    border-left: 1px solid #222;
    background: #2e2e2e;
    white-space: nowrap;
    overflow: hidden;
    letter-spacing: 0;
}

.target-box {
    margin: 6px 4px 0;
    height: 84px;
    padding: 0 0 0 5px;
    box-sizing: border-box;
    background: #3c3c3c;
    border: 1px solid #2c2c2c;
}

.target-label {
    height: 27px;
    padding: 7px 0 0 2px;
    box-sizing: border-box;
    color: #b8b8b8;
    letter-spacing: 0.6px;
}

.target-field-row {
    display: flex;
    align-items: center;
}

.target-field {
    display: flex;
    align-items: center;
    width: 735px;
    height: 15px;
    flex: none;
    box-sizing: border-box;
    background: #4a4a4a;
    border: 1px solid #282828;
    border-bottom-color: #3a3a3a;
    color: #b0b0b0;
    letter-spacing: 0.3px;
}

.ic-font {
    width: 10px;
    height: 11px;
    margin: 0 3px 0 3px;
    flex: none;
}

.target-field .ic-font {
    margin-right: 1px;
}

.ic-target {
    width: 9px;
    height: 9px;
    flex: none;
    margin-left: 8px;
}

.check-row {
    display: flex;
    align-items: center;
    height: 18px;
    margin-top: 1px;
    color: #c0c0c0;
    letter-spacing: 0.6px;
}

.check-row .checkbox {
    margin-right: 1px;
}

.search-btn {
    height: 18px;
    margin-top: 2px;
    background: linear-gradient(#4a4a4a, #3c3c3c);
    border: 1px solid #2a2a2a;
    border-radius: 3px;
    box-sizing: border-box;
    line-height: 16px;
    text-align: center;
    padding-right: 6px;
    color: #a8a8a8;
    letter-spacing: 0.6px;
}

.win-cols {
    display: grid;
    grid-template-columns: 381px 381px;
    column-gap: 4px;
    padding: 0 3px;
}

.col-head {
    display: flex;
    align-items: center;
    justify-content: space-between;
    padding: 0 2px;
    height: 20px;
    margin-top: 10px;
    color: #b4b4b4;
    letter-spacing: 0.5px;
}

.col-head-low {
    height: 20px;
    margin-top: 8px;
    align-items: flex-start;
}

.use-check {
    display: flex;
    align-items: center;
    width: 76px;
    white-space: nowrap;
    margin-top: -7px;
    letter-spacing: 0.6px;
}

.use-check .checkbox {
    margin-right: 1px;
}

.col-sub {
    height: 19px;
    padding-left: 2px;
    box-sizing: border-box;
    line-height: 16px;
    color: #b4b4b4;
}

.table {
    display: flex;
    flex-direction: column;
    height: 193px;
    box-sizing: border-box;
    border: 1px solid #222;
    background: #383838;
}

.t-head {
    display: grid;
    grid-template-columns: 174px 20px 1fr;
    align-items: center;
    height: 27px;
    flex: none;
    box-sizing: border-box;
    padding: 7px 0 0 4px;
    border-bottom: 1px solid #232323;
    background: #3c3c3c;
    color: #8c8c8c;
    letter-spacing: 0.5px;
}

.t-head .t-ic {
    height: 20px;
    margin-top: -9px;
    display: flex;
    align-items: center;
    justify-content: center;
    border-left: 1px solid #555;
    border-right: 1px solid #555;
}

.t-ic svg {
    width: 12px;
    height: 11px;
}

.t-head span:last-child {
    padding-left: 4px;
}

.t-body {
    flex: 1;
    overflow: hidden;
    letter-spacing: 0.3px;
    color: #aaa;
}

.t-row {
    display: grid;
    grid-template-columns: 182px 1fr;
    align-items: start;
    height: 16px;
    overflow: hidden;
}

.t-name {
    display: flex;
    align-items: flex-start;
    height: 16px;
    padding-top: 2px;
    box-sizing: border-box;
    line-height: 16px;
    overflow: hidden;
    white-space: nowrap;
}

.t-name .tri-d, .t-name .tri-r {
    margin-top: 2px;
}

.t-name .tri-d {
    margin-right: 6px;
}

.t-name .ic {
    margin-right: 1px;
}

.wl0 { padding-left: 5px; }
.wl1 { padding: 3px 0 0 19px; }
.wl2 { padding: 1px 0 0 46px; }

.wl1 .tri-d, .wl1 .tri-r {
    margin-top: 1px;
}

.ic-t {
    width: 14px;
    height: 14px;
    margin: -1px 2px 0 0;
    flex: none;
    clip-path: inset(0 0 3px 0);
}

.ic2 {
    width: 12px;
    height: 12px;
    margin-top: 2px;
}

.t-hilite {
    background: #414141;
}

.selected {
    background: #3e5f96;
    color: #c8d2e4;
}

.selected .t-name .tri-d {
    border-top-color: #6684b4;
}

.soft {
    background: #484848;
}

.fn-cell {
    display: flex;
    align-items: center;
    height: 16px;
    margin-left: 19px;
}

.fn-field {
    display: flex;
    align-items: center;
    width: 92px;
    height: 15px;
    flex: none;
    box-sizing: border-box;
    overflow: hidden;
    white-space: nowrap;
    background: #3c3c3c;
    border-top: 1px solid #222;
    color: #aaa;
    letter-spacing: 0.1px;
}

.fn-cell .ic-target {
    margin-left: 7px;
}

.swap-btn {
    flex: 1;
    height: 14px;
    margin-left: 4px;
    line-height: 13px;
    text-align: center;
    background: #434343;
    border-radius: 2px;
    color: #6c6c6c;
    letter-spacing: 1px;
}

.t-scroll {
    display: flex;
    align-items: center;
    height: 14px;
    flex: none;
    background: #2e2e2e;
    border-top: 1px solid #222;
}

.arr-l {
    margin-left: 2px;
    border: 4px solid transparent;
    border-right: 6px solid #555;
    border-left: 0;
}

.arr-r {
    margin-right: 4px;
    border: 4px solid transparent;
    border-left: 6px solid #555;
    border-right: 0;
}

.s-track {
    flex: 1;
    height: 12px;
    margin: 0 4px 0 8px;
    background: #333;
    border-radius: 6px;
}

.s-thumb {
    width: 331px;
    height: 12px;
    border-radius: 6px;
    background: linear-gradient(#505050, #434343);
}

.cursor {
    position: absolute;
    left: 1037px;
    top: 318px;
}
```
